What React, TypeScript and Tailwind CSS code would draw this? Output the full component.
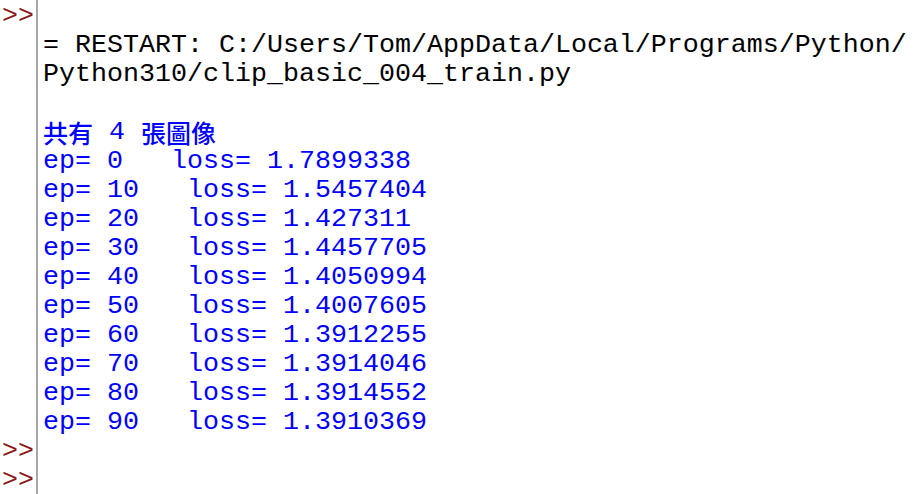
import React from "react";

const mono = { fontFamily: '"Liberation Mono", "Courier New", monospace' };
const cjk = { fontFamily: '"Noto Sans CJK TC", sans-serif' };

type Line = { text: string; kind: "plain" | "out" | "cjk" | "blank" };

const epochs: [string, string][] = [
  ["0", "1.7899338"],
  ["10", "1.5457404"],
  ["20", "1.427311"],
  ["30", "1.4457705"],
  ["40", "1.4050994"],
  ["50", "1.4007605"],
  ["60", "1.3912255"],
  ["70", "1.3914046"],
  ["80", "1.3914552"],
  ["90", "1.3910369"],
];

const lines: Line[] = [
  { text: "", kind: "blank" },
  { text: "= RESTART: C:/Users/Tom/AppData/Local/Programs/Python/", kind: "plain" },
  { text: "Python310/clip_basic_004_train.py", kind: "plain" },
  { text: "", kind: "blank" },
  { text: "", kind: "cjk" },
  ...epochs.map(([ep, loss]) => ({
    text: `ep= ${ep}   loss= ${loss}`,
    kind: "out" as const,
  })),
  { text: "", kind: "blank" },
  { text: "", kind: "blank" },
];

const prompts = [0, 15, 16];

function Row({ line }: { line: Line }) {
  if (line.kind === "cjk") {
    return (
      <div className="h-[29px] flex items-center text-[#0000ff] whitespace-pre">
        <span className="text-[25px] leading-[25px] font-medium" style={cjk}>
          共有
        </span>
        <span className="leading-[25px]"> 4 </span>
        <span className="text-[25px] leading-[25px] font-medium" style={cjk}>
          張圖像
        </span>
      </div>
    );
  }
  return (
    <div
      className={
        "h-[29px] leading-[29px] whitespace-pre " +
        (line.kind === "out" ? "text-[#0000ff]" : "text-[#000000]")
      }
    >
      {line.text}
    </div>
  );
}

export default function App() {
  return (
    <div className="w-[915px] h-[494px] bg-white overflow-hidden flex text-[26.67px]" style={mono}>
      {/* gutter with prompts */}
      <div className="w-[38px] shrink-0 border-r-2 border-[#a7a7a7] pt-[2px]">
        {lines.map((_, i) => (
          <div key={i} className="h-[29px] leading-[29px] pl-[2px] text-[#8b1a1a]">
            {prompts.includes(i) ? ">>" : ""}
          </div>
        ))}
      </div>
      {/* shell text */}
      <div className="flex-1 pl-[5px] pt-[2px]">
        {lines.map((line, i) => (
          <Row key={i} line={line} />
        ))}
      </div>
    </div>
  );
}
